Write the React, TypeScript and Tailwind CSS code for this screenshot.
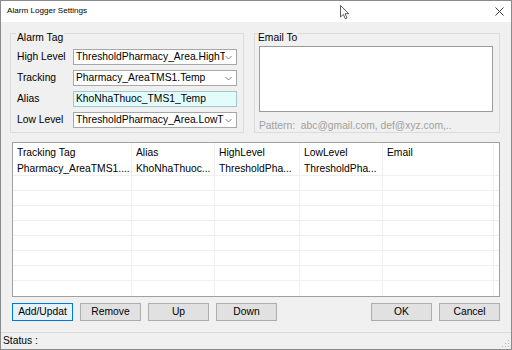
import React from "react";

const font = { fontFamily: '"Liberation Sans", Arial, sans-serif' };

type Row = [string, string, string, string, string];

const header: Row = ["Tracking Tag", "Alias", "HighLevel", "LowLevel", "Email"];
const data: Row = ["Pharmacy_AreaTMS1....", "KhoNhaThuoc...", "ThresholdPha...", "ThresholdPha...", ""];

function Chevron() {
  return (
    <svg width="7" height="5" viewBox="0 0 7 5" className="shrink-0">
      <path d="M0.5 1 L3.5 4 L6.5 1" fill="none" stroke="#777" strokeWidth="0.9" />
    </svg>
  );
}

function Combo({ value }: { value: string }) {
  return (
    <div className="flex h-[16px] w-[164px] items-center justify-between border border-[#a7a7a7] bg-white pl-[2px] pr-[4px]">
      <span className="overflow-hidden whitespace-nowrap leading-[14px]">{value}</span>
      <Chevron />
    </div>
  );
}

function Field({ label, children }: { label: string; children: React.ReactNode }) {
  return (
    <div className="flex h-[16px] items-center">
      <span className="w-[56px] leading-[14px]">{label}</span>
      {children}
    </div>
  );
}

function Cells({ row, h, lead, border }: { row: Row; h: string; lead: string; border: boolean }) {
  const widths = ["w-[119px]", "w-[83px]", "w-[85px]", "w-[83px]", "w-[111px]"];
  return (
    <div className={`flex ${h} ${border ? "border-b border-[#efefef]" : ""}`}>
      {row.map((t, i) => (
        <div
          key={i}
          className={`${widths[i]} ${lead} shrink-0 overflow-hidden whitespace-nowrap border-r border-[#efefef] pl-[4px]`}
        >
          {t}
        </div>
      ))}
      <div className="flex-1" />
    </div>
  );
}

function Button({ label, focused }: { label: string; focused?: boolean }) {
  return (
    <div
      className={`flex h-[18px] w-[61px] items-center justify-center border ${
        focused ? "border-[#0078d7] bg-[#e5f1fb]" : "border-[#adadad] bg-[#e1e1e1]"
      }`}
    >
      {label}
    </div>
  );
}

export default function App() {
  return (
    <div
      className="relative flex h-[350px] w-[512px] flex-col overflow-hidden border border-[#8a8a8a] bg-[#f0f0f0] text-[10.3px] text-black"
      style={font}
    >
      {/* title bar */}
      <div className="flex h-[21px] shrink-0 items-center justify-between bg-white pl-[6px] pr-[7px]">
        <span className="text-[8.1px]">Alarm Logger Settings</span>
        <svg width="9" height="9" viewBox="0 0 9 9">
          <path d="M0.5 0.5 L8.5 8.5 M8.5 0.5 L0.5 8.5" stroke="#222" strokeWidth="0.9" />
        </svg>
      </div>

      {/* mouse pointer */}
      <svg className="absolute left-[339px] top-[4px]" width="10" height="15" viewBox="0 0 10 15">
        <path
          d="M0.5 0.5 L0.5 12 L3.3 9.4 L5.3 13.8 L7 13 L5 8.7 L8.8 8.7 Z"
          fill="white"
          stroke="#333"
          strokeWidth="0.8"
        />
      </svg>

      {/* body */}
      <div className="flex flex-1 flex-col pl-[9px] pr-[11px] pt-[11px]">
        <div className="flex h-[100px] gap-[10px]">
          <div className="relative w-[234px] border border-[#dcdcdc] pl-[6px] pt-[15px]">
            <span className="absolute left-[5px] top-[-3px] bg-[#f0f0f0] px-[1px] leading-[13px]">Alarm Tag</span>
            <div className="flex flex-col gap-[5px]">
              <Field label="High Level">
                <Combo value="ThresholdPharmacy_Area.HighT" />
              </Field>
              <Field label="Tracking">
                <Combo value="Pharmacy_AreaTMS1.Temp" />
              </Field>
              <Field label="Alias">
                <div className="flex h-[16px] w-[164px] items-center border border-[#a7c4c8] bg-[#e2fcfc] pl-[2px] leading-[14px]">
                  KhoNhaThuoc_TMS1_Temp
                </div>
              </Field>
              <Field label="Low Level">
                <Combo value="ThresholdPharmacy_Area.LowT" />
              </Field>
            </div>
          </div>

          <div className="relative flex-1 border border-[#dcdcdc] pl-[4px] pr-[6px] pt-[12px]">
            <span className="absolute left-[2px] top-[-3px] bg-[#f0f0f0] px-[1px] leading-[13px]">Email To</span>
            <div className="h-[66px] border border-[#9a9a9a] bg-white" />
            <div className="mt-[8px] leading-[12px] text-[#a0a0a0]">Pattern:&nbsp; abc@gmail.com, def@xyz.com,..</div>
          </div>
        </div>

        {/* list */}
        <div className="ml-[2px] mt-[9px] flex h-[155px] flex-col border border-[#a0a0a0] bg-white">
          <Cells row={header} h="h-[17px]" lead="pt-[3px] leading-[14px]" border={false} />
          <Cells row={data} h="h-[16px]" lead="pt-[2px] leading-[14px]" border />
          {Array.from({ length: 8 }).map((_, i) => (
            <Cells key={i} row={["", "", "", "", ""]} h="h-[15px]" lead="" border={i < 7} />
          ))}
        </div>

        {/* buttons */}
        <div className="ml-[2px] mt-[6px] flex gap-[7px]">
          <Button label="Add/Updat" focused />
          <Button label="Remove" />
          <Button label="Up" />
          <Button label="Down" />
          <div className="flex-1" />
          <Button label="OK" />
          <Button label="Cancel" />
        </div>
      </div>

      {/* status bar */}
      <div className="relative flex h-[17px] shrink-0 items-center border-t border-[#dadada] pl-[2px]">
        <span className="leading-[14px]">Status :</span>
        <svg className="absolute bottom-[1px] right-[1px]" width="8" height="8" viewBox="0 0 8 8">
          <g fill="#b0b0b0">
            <rect x="6" y="0" width="1" height="1" />
            <rect x="3" y="3" width="1" height="1" />
            <rect x="6" y="3" width="1" height="1" />
            <rect x="0" y="6" width="1" height="1" />
            <rect x="3" y="6" width="1" height="1" />
            <rect x="6" y="6" width="1" height="1" />
          </g>
        </svg>
      </div>
    </div>
  );
}
